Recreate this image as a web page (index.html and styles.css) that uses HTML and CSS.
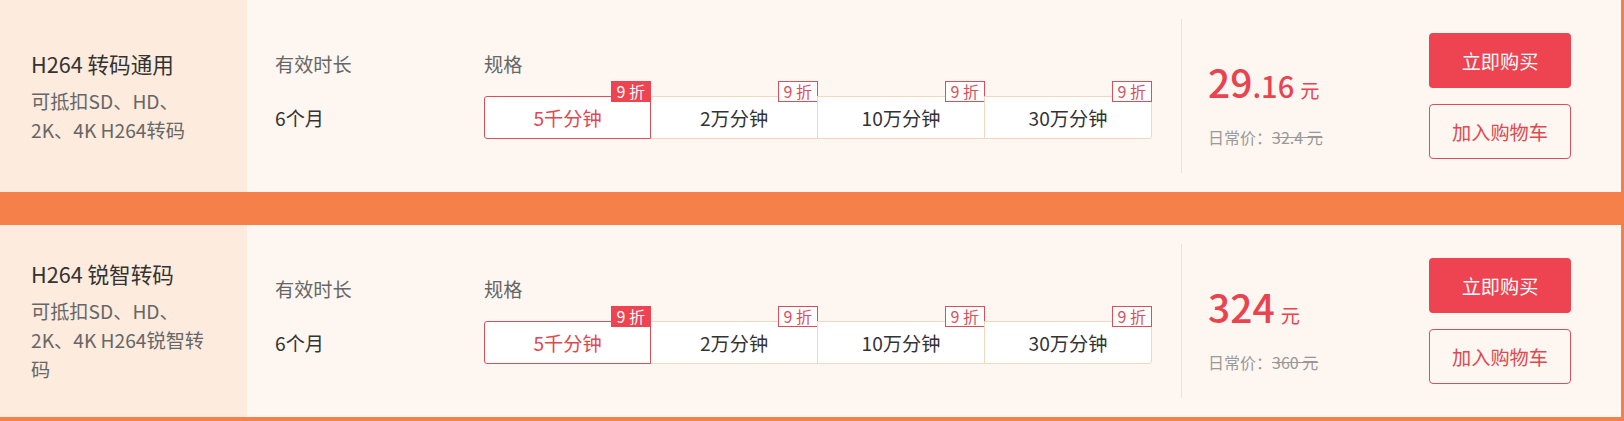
FILE: index.html
```html
<!DOCTYPE html>
<html lang="zh-CN">
<head>
<meta charset="utf-8">
<title>转码套餐</title>
<link rel="stylesheet" href="styles.css">
</head>
<body>
<div class="page">
  <div class="card">
    <div class="info">
      <div class="info-inner">
        <div class="title">H264 转码通用</div>
        <div class="desc">可抵扣SD、HD、2K、4K H264转码</div>
      </div>
    </div>
    <div class="opts">
      <div class="dur">
        <div class="label">有效时长</div>
        <div class="dur-val">6个月</div>
      </div>
      <div class="spec">
        <div class="label">规格</div>
        <div class="spec-list">
          <div class="spec-item active">5千分钟<span class="tag">9 折</span></div>
          <div class="spec-item">2万分钟<span class="tag">9 折</span></div>
          <div class="spec-item">10万分钟<span class="tag">9 折</span></div>
          <div class="spec-item">30万分钟<span class="tag">9 折</span></div>
        </div>
      </div>
    </div>
    <div class="price-col">
      <div class="price"><span class="int">29</span><span class="dec">.16</span><span class="unit">元</span></div>
      <div class="orig">日常价：<s>32.4 元</s></div>
    </div>
    <div class="actions">
      <button class="btn buy">立即购买</button>
      <button class="btn cart">加入购物车</button>
    </div>
  </div>

  <div class="card">
    <div class="info">
      <div class="info-inner">
        <div class="title">H264 锐智转码</div>
        <div class="desc">可抵扣SD、HD、2K、4K H264锐智转码</div>
      </div>
    </div>
    <div class="opts">
      <div class="dur">
        <div class="label">有效时长</div>
        <div class="dur-val">6个月</div>
      </div>
      <div class="spec">
        <div class="label">规格</div>
        <div class="spec-list">
          <div class="spec-item active">5千分钟<span class="tag">9 折</span></div>
          <div class="spec-item">2万分钟<span class="tag">9 折</span></div>
          <div class="spec-item">10万分钟<span class="tag">9 折</span></div>
          <div class="spec-item">30万分钟<span class="tag">9 折</span></div>
        </div>
      </div>
    </div>
    <div class="price-col">
      <div class="price"><span class="int">324</span><span class="unit">元</span></div>
      <div class="orig">日常价：<s>360 元</s></div>
    </div>
    <div class="actions">
      <button class="btn buy">立即购买</button>
      <button class="btn cart">加入购物车</button>
    </div>
  </div>
</div>
</body>
</html>
```

FILE: styles.css
```css
html, body {
  margin: 0;
  padding: 0;
}

body {
  background: #f6804a;
  font-family: "Noto Sans CJK SC", "Noto Sans", sans-serif;
  color: #333;
}

.page {
  width: 1621px;
  padding-bottom: 4px;
}

.card {
  display: flex;
  height: 192px;
  background: #fef6f0;
  margin-bottom: 33px;
}

.card:last-child {
  margin-bottom: 0;
}

.info {
  width: 247px;
  flex: none;
  box-sizing: border-box;
  padding-left: 31px;
  background: #fdebde;
  display: flex;
  align-items: center;
}

.title {
  font-size: 21.6px;
  line-height: 32px;
  font-weight: 400;
  color: #333;
}

.desc {
  margin-top: 7px;
  width: 180px;
  font-size: 19.2px;
  line-height: 28.8px;
  color: #666;
}

.opts {
  display: flex;
  padding-left: 28px;
  padding-top: 50px;
}

.dur {
  width: 209px;
}

.label {
  font-size: 19.2px;
  line-height: 29px;
  color: #666;
}

.dur-val {
  margin-top: 18px;
  font-size: 19.2px;
  line-height: 43px;
  color: #333;
}

.spec {
  width: 668px;
}

.spec-list {
  margin-top: 17px;
  display: grid;
  grid-template-columns: repeat(4, 1fr);
}

.spec-item {
  position: relative;
  height: 43px;
  box-sizing: border-box;
  margin-left: -1px;
  border: 1px solid #f0d8bf;
  background: #fff;
  display: flex;
  align-items: center;
  justify-content: center;
  font-size: 19.2px;
  color: #333;
}

.spec-item:first-child {
  margin-left: 0;
  border-radius: 3px 0 0 3px;
}

.spec-item:last-child {
  border-radius: 0 3px 3px 0;
}

.spec-item.active {
  border-color: #d9505a;
  color: #e0474f;
  z-index: 1;
}

.tag {
  position: absolute;
  top: -16px;
  right: -1px;
  height: 21px;
  box-sizing: border-box;
  padding: 0 5px;
  border: 1px solid #d9505a;
  background: #fff;
  color: #d9505a;
  font-size: 16px;
  line-height: 19px;
}

.spec-item.active .tag {
  background: #ee4350;
  border-color: #ee4350;
  color: #fff;
}

.price-col {
  flex: 1;
  margin: 19px 0 19px 29px;
  border-left: 1px solid #eee0d3;
  padding-left: 26px;
  padding-top: 40px;
}

.price {
  color: #e9434f;
  line-height: 44px;
  white-space: nowrap;
}

.int {
  font-size: 39px;
  font-weight: 500;
}

.dec {
  font-size: 29px;
  font-weight: 500;
}

.unit {
  font-size: 19.2px;
  margin-left: 6px;
}

.orig {
  margin-top: 12px;
  font-size: 16px;
  line-height: 24px;
  color: #999;
}

.orig s {
  color: #999;
}

.actions {
  width: 142px;
  flex: none;
  margin-right: 50px;
  padding-top: 33px;
  display: flex;
  flex-direction: column;
  gap: 16px;
}

.btn {
  height: 55px;
  border-radius: 4px;
  font-family: inherit;
  font-size: 19.2px;
  cursor: pointer;
  padding: 0;
}

.btn.buy {
  background: #ee4350;
  color: #fff;
  border: 0;
}

.btn.cart {
  background: transparent;
  border: 1px solid #d9505a;
  color: #e0474f;
}
```
